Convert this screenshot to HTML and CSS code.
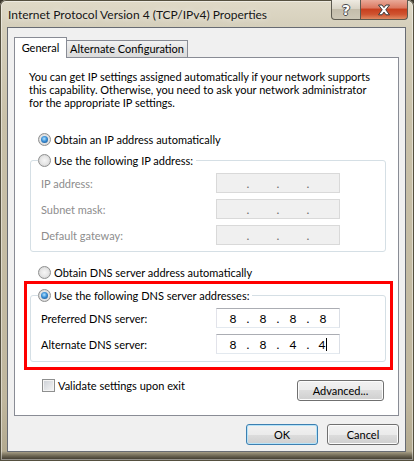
FILE: index.html
```html
<!DOCTYPE html>
<html lang="en">
<head>
    <meta charset="UTF-8">
    <meta name="viewport" content="width=device-width, initial-scale=1.0">
    <title>Internet Protocol Version 4 (TCP/IPv4) Properties</title>
    <link rel="stylesheet" href="styles.css">
</head>
<body>
<div class="window">

    <!-- Titelbalk -->
    <div class="titlebar">
        <span class="title">Internet Protocol Version 4 (TCP/IPv4) Properties</span>
        <div class="captions">
            <span class="cap help">?</span>
            <span class="cap close">
                <svg width="14" height="12" viewBox="0 0 14 12">
                    <path d="M1.5 1 L5 1 L7 3.6 L9 1 L12.5 1 L8.8 5.8 L12.5 10.8 L9 10.8 L7 8.1 L5 10.8 L1.5 10.8 L5.2 5.8 Z" fill="#fff" stroke="#3b3b3b" stroke-width="1" stroke-linejoin="round"/>
                </svg>
            </span>
        </div>
    </div>

    <div class="client">
        <div class="tabs">
            <span class="tab active">General</span>
            <span class="tab">Alternate Configuration</span>
        </div>

        <div class="panel">
            <p class="intro">You can get IP settings assigned automatically if your network supports<br>
            this capability. Otherwise, you need to ask your network administrator<br>
            for the appropriate IP settings.</p>

            <div class="option first"><span class="radio on"></span>Obtain an IP address automatically</div>

            <fieldset class="group">
                <legend><span class="radio"></span>Use the following IP address:</legend>
                <div class="row disabled">
                    <span class="label">IP address:</span>
                    <span class="ipbox"><span class="f"></span><span class="dot">.</span><span class="f"></span><span class="dot">.</span><span class="f"></span><span class="dot">.</span><span class="f"></span></span>
                </div>
                <div class="row disabled">
                    <span class="label">Subnet mask:</span>
                    <span class="ipbox"><span class="f"></span><span class="dot">.</span><span class="f"></span><span class="dot">.</span><span class="f"></span><span class="dot">.</span><span class="f"></span></span>
                </div>
                <div class="row disabled">
                    <span class="label">Default gateway:</span>
                    <span class="ipbox"><span class="f"></span><span class="dot">.</span><span class="f"></span><span class="dot">.</span><span class="f"></span><span class="dot">.</span><span class="f"></span></span>
                </div>
            </fieldset>

            <div class="option dns-auto"><span class="radio"></span>Obtain DNS server address automatically</div>

            <!-- rode markering rond de DNS instellingen -->
            <div class="highlight">
                <fieldset class="group dns">
                    <legend><span class="radio on"></span>Use the following DNS server addresses:</legend>
                    <div class="row">
                        <span class="label">Preferred DNS server:</span>
                        <span class="ipbox"><span class="f">8</span><span class="dot">.</span><span class="f">8</span><span class="dot">.</span><span class="f">8</span><span class="dot">.</span><span class="f">8</span></span>
                    </div>
                    <div class="row">
                        <span class="label">Alternate DNS server:</span>
                        <span class="ipbox"><span class="f">8</span><span class="dot">.</span><span class="f">8</span><span class="dot">.</span><span class="f">4</span><span class="dot">.</span><span class="f">4<span class="caret"></span></span></span>
                    </div>
                </fieldset>
            </div>

            <div class="bottomrow">
                <span class="check"><span class="box"></span>Validate settings upon exit</span>
                <span class="button advanced">Advanced...</span>
            </div>
        </div>

        <div class="footer">
            <span class="button default">OK</span>
            <span class="button">Cancel</span>
        </div>
    </div>
</div>
</body>
</html>
```

FILE: styles.css
```css
/* Basis */
* {
    box-sizing: border-box;
}

body {
    margin: 0;
    width: 414px;
    height: 461px;
    overflow: hidden;
    font-family: Lato, "Liberation Sans", sans-serif;
    font-size: 11px;
    color: #000;
    background: #3a352b;
}

/* Vensterrand (glas) */
.window {
    width: 414px;
    height: 461px;
    border-radius: 6px 6px 0 0;
    background: linear-gradient(to bottom, #e0dac8 0, #d5cfbb 27px, #c9c1a9 120px, #c0b79e 400px, #b3aa90 451px, #6a6351 456px, #2c2820 461px);
    box-shadow: inset 0 0 0 1px #55503f, inset 0 0 0 2px rgba(255, 255, 255, 0.45);
}

.titlebar {
    height: 27px;
    display: flex;
    justify-content: space-between;
    align-items: flex-start;
}

.title {
    padding: 8px 0 0 8px;
    font-size: 12px;
    line-height: 14px;
    color: #161616;
    text-shadow: 0 0 6px rgba(255, 255, 255, 0.9);
}

.captions {
    display: flex;
    margin-right: 6px;
}

.cap {
    height: 20px;
    display: flex;
    align-items: center;
    justify-content: center;
    border: 1px solid #5d5a50;
    border-top: none;
}

.help {
    width: 30px;
    border-radius: 0 0 0 4px;
    background: linear-gradient(to bottom, #efebe2 0, #d9d4c6 45%, #c4bdab 50%, #cdc7b6 100%);
    color: #fff;
    font-family: "DejaVu Sans", sans-serif;
    font-weight: bold;
    font-size: 14px;
    text-shadow: -1px 0 #4a4a4a, 1px 0 #4a4a4a, 0 -1px #4a4a4a, 0 1px #4a4a4a;
}

.close {
    width: 47px;
    border-left: none;
    border-radius: 0 0 4px 0;
    background: linear-gradient(to bottom, #e9a998 0, #dc7a62 40%, #c8401f 50%, #cf5330 75%, #e08a62 100%);
}

/* Werkgebied */
.client {
    margin: 0 8px 0 7px;
    height: 425px;
    border: 1px solid #676b73;
    background: #f0f0f0;
    padding: 9px 6px 7px 6px;
}

.tabs {
    display: flex;
    align-items: flex-end;
}

.tab {
    height: 17px;
    width: 122px;
    margin-left: -1px;
    border: 1px solid #898c95;
    border-bottom: none;
    padding-top: 1px;
    text-align: center;
    line-height: 14px;
    white-space: nowrap;
    background: linear-gradient(to bottom, #f2f2f2, #e4e4e4 50%, #dbdbdb);
}

.tab.active {
    position: relative;
    z-index: 1;
    width: 53px;
    height: 21px;
    margin-left: 0;
    margin-bottom: -1px;
    padding-top: 3px;
    background: #fff;
}

.panel {
    height: 359px;
    border: 1px solid #898c95;
    background: #fff;
    padding-top: 12px;
}

.intro {
    margin: 0 0 0 14px;
    line-height: 13px;
    white-space: nowrap;
}

.option {
    display: flex;
    align-items: center;
    height: 14px;
    margin-left: 23px;
}

.option.first {
    margin-top: 23px;
}

.option.dns-auto {
    margin-top: 13px;
}

.radio {
    width: 13px;
    height: 13px;
    margin-right: 3px;
    border-radius: 50%;
    border: 1px solid #8e8f8f;
    background: radial-gradient(circle at 50% 50%, #f6f6f6 0, #e6e6e6 50%, #c9c9c9 100%);
    display: flex;
    align-items: center;
    justify-content: center;
    flex-shrink: 0;
}

.radio.on::after {
    content: "";
    width: 7px;
    height: 7px;
    border-radius: 50%;
    background: radial-gradient(circle at 45% 40%, #b5e4ff 0, #3a8fd6 45%, #11467f 100%);
}

/* Groepsvakken */
.group {
    margin: 7px 0 0 15px;
    width: 356px;
    padding: 6px 0 6px 0;
    border: 1px solid #d5dfe5;
    border-radius: 3px;
}

.group legend {
    margin-left: 7px;
    padding: 0 3px 0 0;
    display: flex;
    align-items: center;
    height: 14px;
}

.group.dns {
    margin: 0;
    padding-bottom: 7px;
}

.row {
    display: flex;
    align-items: center;
    height: 20px;
    padding-left: 10px;
}

.row + .row {
    margin-top: 6px;
}

.label {
    width: 175px;
}

.ipbox {
    width: 124px;
    height: 20px;
    display: flex;
    align-items: center;
    padding-left: 3px;
    border: 1px solid;
    border-color: #abadb3 #dbdfe6 #e3e9ef #e2e3ea;
    background: #fff;
    font-size: 12px;
}

.ipbox .f {
    width: 26px;
    text-align: center;
}

.ipbox .dot {
    width: 4px;
    text-align: center;
}

.caret {
    display: inline-block;
    width: 1px;
    height: 13px;
    margin-left: 1px;
    vertical-align: -2px;
    background: #000;
}

.row.disabled .label {
    color: #8d8d8d;
}

.row.disabled .ipbox {
    border-color: #d9d9d9;
    background: #f0f0f0;
    color: #6d6d6d;
}

.highlight {
    margin: 2px 0 0 9px;
    width: 369px;
    height: 89px;
    border: 3px solid #ff0000;
    padding: 4px 4px 5px 3px;
}

/* Onderste rij */
.bottomrow {
    display: flex;
    justify-content: space-between;
    align-items: flex-start;
    margin-top: 10px;
    padding: 0 14px 0 27px;
}

.check {
    display: flex;
    align-items: center;
    margin-top: -1px;
    height: 13px;
}

.box {
    width: 13px;
    height: 13px;
    margin-right: 3px;
    border: 1px solid #8e8f8f;
    background: linear-gradient(135deg, #cbcfd5, #f6f6f6);
    box-shadow: inset 0 0 0 1px #f4f4f4;
}

.button {
    display: flex;
    align-items: center;
    justify-content: center;
    width: 72px;
    height: 21px;
    border: 1px solid #707070;
    border-radius: 3px;
    background: linear-gradient(to bottom, #f2f2f2 0, #ebebeb 50%, #dddddd 50%, #cfcfcf 100%);
    box-shadow: inset 0 0 0 1px #fcfcfc;
}

.button.advanced {
    width: 87px;
}

.button.default {
    border-color: #3c7fb1;
    box-shadow: inset 0 0 0 1px #b6e3f8;
}

.footer {
    display: flex;
    justify-content: flex-end;
    gap: 9px;
    margin-top: 8px;
}
```
